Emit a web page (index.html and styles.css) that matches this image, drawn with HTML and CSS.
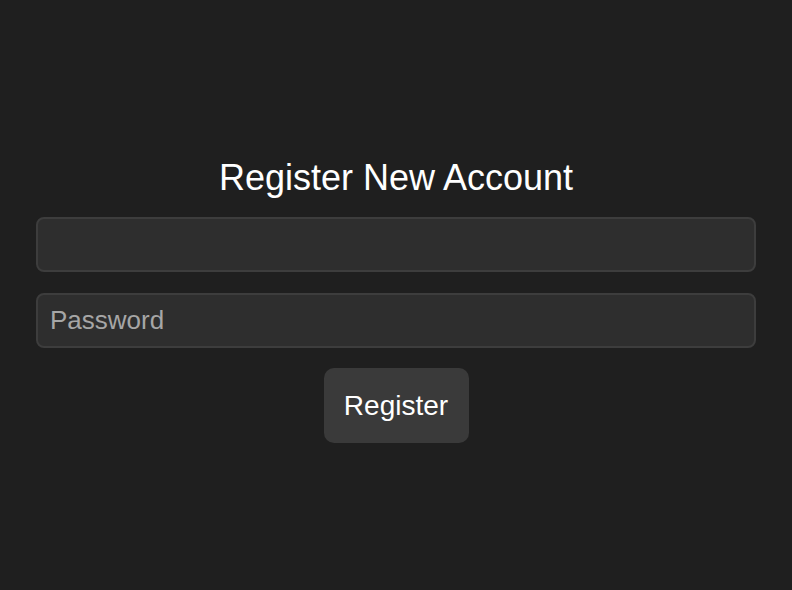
FILE: index.html
```html
<!DOCTYPE html>
<html lang="en">
<head>
<meta charset="utf-8">
<title>Register New Account</title>
<link rel="stylesheet" href="styles.css">
</head>
<body>
<main class="page">
  <form class="register-form">
    <h1 class="title">Register New Account</h1>
    <input class="field" type="text" aria-label="Username">
    <input class="field" type="password" placeholder="Password">
    <button class="btn" type="button">Register</button>
  </form>
</main>
</body>
</html>
```
FILE: styles.css
```css
html, body {
  margin: 0;
  padding: 0;
  background: #1f1f1f;
  height: 100%;
}
body {
  font-family: "Liberation Sans", Arial, sans-serif;
  color: #ffffff;
}
.page {
  height: 590px;
  box-sizing: border-box;
  padding: 157px 36px 0;
}
.register-form {
  display: flex;
  flex-direction: column;
  align-items: center;
}
.title {
  margin: 0 0 19px;
  font-size: 36px;
  font-weight: normal;
  line-height: 41px;
  color: #ffffff;
}
.field {
  width: 720px;
  height: 55px;
  box-sizing: border-box;
  margin: 0 0 21px;
  padding: 0 12px;
  background: #2e2e2e;
  border: 2px solid #3d3d3d;
  border-radius: 8px;
  font-family: "Liberation Sans", Arial, sans-serif;
  font-size: 26px;
  color: #ffffff;
  outline: none;
}
.field::placeholder {
  color: #a6a6a6;
}
.field + .btn {
  margin-top: -1px;
}
.btn {
  width: 145px;
  height: 75px;
  background: #3a3a3a;
  border: none;
  border-radius: 10px;
  color: #ffffff;
  font-family: "Liberation Sans", Arial, sans-serif;
  font-size: 28px;
  padding: 0;
}
```
